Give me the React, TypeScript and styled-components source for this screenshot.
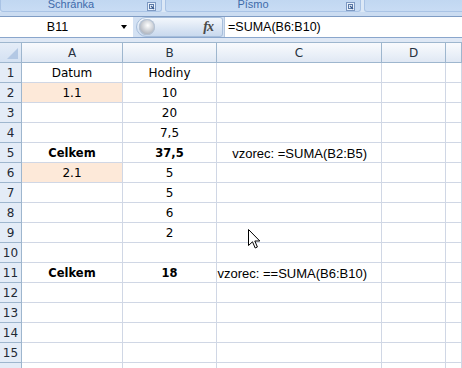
import styled, { createGlobalStyle } from 'styled-components';

const GlobalStyle = createGlobalStyle`
  html, body {
    margin: 0;
    padding: 0;
  }
  body {
    width: 462px;
    height: 368px;
    overflow: hidden;
    background: #ffffff;
    font-family: "DejaVu Sans", Verdana, sans-serif;
  }
`;

type Cell = {
  text?: string;
  bold?: boolean;
  fill?: boolean;
  formula?: boolean;
};

type Row = { a?: Cell; b?: Cell; c?: Cell };

const rows: Row[] = [
  { a: { text: 'Datum' }, b: { text: 'Hodiny' } },
  { a: { text: '1.1', fill: true }, b: { text: '10' } },
  { b: { text: '20' } },
  { b: { text: '7,5' } },
  {
    a: { text: 'Celkem', bold: true },
    b: { text: '37,5', bold: true },
    c: { text: 'vzorec: =SUMA(B2:B5)', formula: true },
  },
  { a: { text: '2.1', fill: true }, b: { text: '5' } },
  { b: { text: '5' } },
  { b: { text: '6' } },
  { b: { text: '2' } },
  {},
  {
    a: { text: 'Celkem', bold: true },
    b: { text: '18', bold: true },
    c: { text: 'vzorec: ==SUMA(B6:B10)', formula: true },
  },
  {},
  {},
  {},
  {},
];

const columns = ['A', 'B', 'C', 'D', ''];

function Launcher() {
  return (
    <svg width="9" height="9" viewBox="0 0 9 9">
      <rect x="0.5" y="0.5" width="8" height="8" fill="#e8f0fa" stroke="#7d99c2" />
      <rect x="2.5" y="2.5" width="4" height="4" fill="none" stroke="#5a7aa8" />
      <path d="M4 4 L7 7" stroke="#3b5a8a" strokeWidth="1.2" />
    </svg>
  );
}

function Cursor() {
  return (
    <svg width="13" height="20" viewBox="0 0 13 20">
      <path
        d="M0.5 0.5 L0.5 16.5 L4.5 12.8 L7.2 19 L9.4 18 L6.8 12 L11.8 12 Z"
        fill="#ffffff"
        stroke="#000000"
        strokeWidth="1"
        strokeLinejoin="miter"
      />
    </svg>
  );
}

export default function App() {
  return (
    <Window>
      <GlobalStyle />
      <Ribbon>
        <Group $width={162}>
          <GroupLabel $shift={6}>Schránka</GroupLabel>
          <Launcher />
        </Group>
        <Group $width={196}>
          <GroupLabel $shift={6}>Písmo</GroupLabel>
          <Launcher />
        </Group>
        <Group $width={120} />
      </Ribbon>
      <Band />
      <FormulaBar>
        <NameBox>
          <NameText>B11</NameText>
          <DropArrow />
        </NameBox>
        <FxPill>
          <Sphere />
          <FxLabel>fx</FxLabel>
        </FxPill>
        <FormulaInput>=SUMA(B6:B10)</FormulaInput>
      </FormulaBar>
      <Gap />
      <Sheet>
        <Corner>
          <CornerMark />
        </Corner>
        {columns.map((c, i) => (
          <ColHeader key={i}>{c}</ColHeader>
        ))}
        {rows.map((r, idx) => (
          <RowGroup key={idx}>
            <RowHeader>{idx + 1}</RowHeader>
            {[r.a, r.b, r.c].map((cell, ci) => (
              <GridCell
                key={ci}
                $bold={cell?.bold}
                $fill={cell?.fill}
                $formula={cell?.formula}
              >
                {cell?.text}
              </GridCell>
            ))}
            <GridCell />
            <GridCell />
          </RowGroup>
        ))}
        {/* row 16 only peeks in at the bottom edge */}
        <RowGroup>
          <RowHeader />
          <GridCell />
          <GridCell />
          <GridCell />
          <GridCell />
          <GridCell />
        </RowGroup>
      </Sheet>
      <Pointer>
        <Cursor />
      </Pointer>
    </Window>
  );
}

const Window = styled.div`
  position: relative;
  width: 462px;
  height: 368px;
  overflow: hidden;
  background: #ffffff;
`;

const Ribbon = styled.div`
  display: flex;
  gap: 3px;
  height: 12px;
  overflow: hidden;
  background: #dce8f6;
`;

const Group = styled.div<{ $width: number }>`
  flex: 0 0 ${p => p.$width}px;
  box-sizing: border-box;
  display: flex;
  align-items: flex-start;
  padding-right: 5px;
  background: linear-gradient(#c1d7f1, #c8dcf4);
  border: 1px solid #a9c3e5;
  border-top: none;
  border-radius: 0 0 3px 3px;
  svg {
    margin-top: 2px;
  }
`;

const GroupLabel = styled.div<{ $shift: number }>`
  flex: 1;
  text-align: center;
  padding-right: ${p => p.$shift}px;
  margin-top: -2px;
  font-family: "Liberation Sans", Arial, sans-serif;
  font-size: 11px;
  line-height: 12px;
  color: #3e6aaa;
`;

const Band = styled.div`
  height: 4px;
  background: #cbdcf1;
`;

const FormulaBar = styled.div`
  display: flex;
  align-items: stretch;
  height: 22px;
  box-sizing: border-box;
  border-top: 1px solid #7f9cc4;
  border-bottom: 1px solid #8aa6cc;
  background: #d3e1f3;
`;

const NameBox = styled.div`
  flex: 0 0 133px;
  display: flex;
  align-items: center;
  background: #ffffff;
  padding-right: 3px;
  box-sizing: border-box;
`;

const NameText = styled.span`
  flex: 1;
  text-align: center;
  padding-right: 6px;
  font-family: "Liberation Sans", Arial, sans-serif;
  font-size: 12.5px;
  color: #000000;
`;

const DropArrow = styled.span`
  width: 0;
  height: 0;
  margin-right: 3px;
  border-left: 3.5px solid transparent;
  border-right: 3.5px solid transparent;
  border-top: 4px solid #000000;
`;

const FxPill = styled.div`
  flex: 0 0 87px;
  margin-left: 3px;
  display: flex;
  align-items: center;
  justify-content: space-between;
  box-sizing: border-box;
  padding: 0 9px 0 2px;
  border: 1px solid #a7bedb;
  border-radius: 10px 3px 3px 10px;
  background: linear-gradient(#f3f7fc, #dbe6f4 55%, #c9d9ee);
`;

const Sphere = styled.span`
  width: 16px;
  height: 16px;
  border-radius: 50%;
  background: radial-gradient(circle at 55% 40%, #ffffff 0%, #d6d9de 35%, #a8adb6 75%, #8c939e 100%);
  box-shadow: inset 0 0 0 1px #b4c3d6;
`;

const FxLabel = styled.span`
  font-family: "Liberation Serif", "Times New Roman", serif;
  font-style: italic;
  font-weight: bold;
  font-size: 14px;
  letter-spacing: -1px;
  color: #4a4a4a;
`;

const FormulaInput = styled.div`
  flex: 1;
  display: flex;
  align-items: center;
  margin-left: 1px;
  padding-left: 3px;
  background: #ffffff;
  border-left: 1px solid #b6c7de;
  font-family: "Liberation Sans", Arial, sans-serif;
  font-size: 12.5px;
  color: #000000;
`;

const Gap = styled.div`
  height: 4px;
  background: #dfe8f5;
`;

const Sheet = styled.div`
  display: grid;
  grid-template-columns: 22px 101px 94px 165px 64px 1fr;
  grid-template-rows: 21px;
  grid-auto-rows: 20px;
`;

const RowGroup = styled.div`
  display: contents;
`;

const Corner = styled.div`
  box-sizing: border-box;
  display: flex;
  align-items: flex-end;
  justify-content: flex-end;
  padding: 0 3px 3px 0;
  background: linear-gradient(#e5edf8, #d4e1f2);
  border-top: 1px solid #9eb6ce;
  border-right: 1px solid #9eb6ce;
  border-bottom: 1px solid #9eb6ce;
`;

const CornerMark = styled.span`
  width: 0;
  height: 0;
  border-left: 11px solid transparent;
  border-bottom: 11px solid #b3c8e4;
`;

const ColHeader = styled.div`
  box-sizing: border-box;
  display: flex;
  align-items: center;
  justify-content: center;
  padding-top: 1px;
  background: linear-gradient(#f9fafd, #eaf0f8 60%, #e0e8f4);
  border-top: 1px solid #9eb6ce;
  border-right: 1px solid #9eb6ce;
  border-bottom: 1px solid #9eb6ce;
  font-size: 12px;
  color: #27323f;
`;

const RowHeader = styled.div`
  box-sizing: border-box;
  text-align: center;
  padding-top: 2px;
  line-height: 17px;
  background: #e4ecf7;
  border-right: 1px solid #9eb6ce;
  border-bottom: 1px solid #9eb6ce;
  font-size: 12px;
  color: #1f2935;
`;

const GridCell = styled.div<{ $bold?: boolean; $fill?: boolean; $formula?: boolean }>`
  box-sizing: border-box;
  overflow: visible;
  white-space: nowrap;
  text-align: ${p => (p.$formula ? 'right' : 'center')};
  padding: 2px ${p => (p.$formula ? '14px' : '0')} 0 0;
  line-height: 17px;
  background: ${p => (p.$fill ? '#fde9d9' : '#ffffff')};
  border-right: 1px solid #d0d7e5;
  border-bottom: 1px solid #d0d7e5;
  font-family: ${p =>
    p.$formula ? '"Liberation Sans", Arial, sans-serif' : '"DejaVu Sans", Verdana, sans-serif'};
  font-size: ${p => (p.$formula ? '13px' : p.$bold ? '11.5px' : '12px')};
  font-weight: ${p => (p.$bold ? 'bold' : 'normal')};
  color: #000000;
`;

const Pointer = styled.div`
  position: absolute;
  left: 248px;
  top: 229px;
  line-height: 0;
  pointer-events: none;
`;
